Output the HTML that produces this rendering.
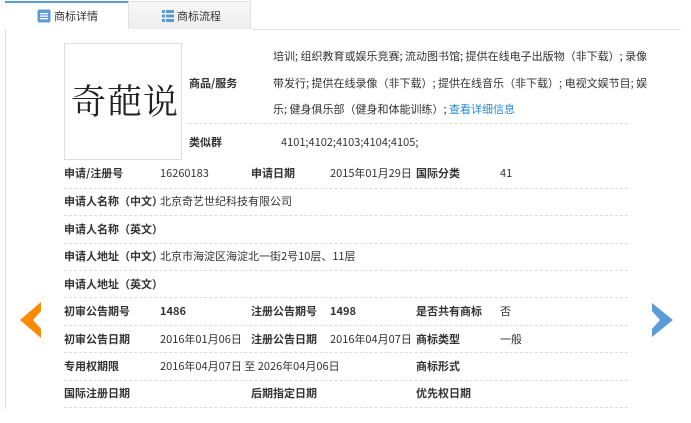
<!DOCTYPE html>
<html><head><meta charset="utf-8"><style>
*{margin:0;padding:0;box-sizing:border-box}
body{width:691px;height:423px;background:#fff;font-family:"Noto Sans CJK SC","Liberation Sans",sans-serif;font-size:11px;line-height:14px;color:#333;position:relative;overflow:hidden}
.a{position:absolute;white-space:nowrap}
.l{font-weight:bold;color:#333}
.sep{position:absolute;left:64px;width:564px;border-top:1px dashed #dcdcdc;height:0}
</style></head><body>
<div class="a" style="left:5px;top:1px;width:123px;height:29px;border-top:2px solid #5b9bd5;background:#fff"></div>
<div class="a" style="left:128px;top:1px;width:123px;height:28px;background:linear-gradient(#f7f7f7,#eeeeee);border:1px solid #e0e0e0;border-bottom:none"></div>
<div class="a" style="left:251px;top:29px;width:430px;border-top:1px solid #e3e3e3"></div>
<div class="a" style="left:5px;top:29px;width:1px;height:380px;background:#e3e3e3"></div>
<svg class="a" style="left:37px;top:9px" width="14" height="14"><rect x="0.5" y="0.5" width="13" height="13" rx="2" fill="#5b9bd5"/><rect x="3" y="4" width="8" height="1.3" fill="#fff"/><rect x="3" y="6.5" width="8" height="1.3" fill="#fff"/><rect x="3" y="9" width="8" height="1.3" fill="#fff"/></svg>
<div class="a" style="left:54px;top:9px">商标详情</div>
<svg class="a" style="left:162px;top:10px" width="12" height="12" fill="#5b9bd5"><rect x="0" y="0" width="3" height="3"/><rect x="4" y="0" width="8" height="3"/><rect x="0" y="4.5" width="3" height="3"/><rect x="4" y="4.5" width="8" height="3"/><rect x="0" y="9" width="3" height="3"/><rect x="4" y="9" width="8" height="3"/></svg>
<div class="a" style="left:177px;top:9px">商标流程</div>

<div class="a" style="left:64px;top:43px;width:118px;height:117px;border:1px solid #ddd"></div>
<div class="a" style="left:71px;top:78px;font-size:35px;line-height:44px;font-family:'Noto Serif CJK SC','Noto Sans CJK SC',serif;color:#222;letter-spacing:1px">奇葩说</div>

<div class="a l" style="left:189px;top:76px">商品/服务</div>
<div class="a" style="left:273px;top:49px">培训; 组织教育或娱乐竞赛; 流动图书馆; 提供在线电子出版物（非下载）; 录像</div>
<div class="a" style="left:273px;top:76px">带发行; 提供在线录像（非下载）; 提供在线音乐（非下载）; 电视文娱节目; 娱</div>
<div class="a" style="left:273px;top:102px">乐; 健身俱乐部（健身和体能训练）; <span style="color:#2a8bd6">查看详细信息</span></div>
<div class="a" style="left:189px;top:123px;width:439px;border-top:1px dashed #dcdcdc"></div>
<div class="a l" style="left:189px;top:135px">类似群</div>
<div class="a" style="left:281px;top:135px">4101;4102;4103;4104;4105;</div>

<div class="a l" style="left:64px;top:166px">申请/注册号</div><div class="a" style="left:160px;top:166px">16260183</div>
<div class="a l" style="left:251px;top:166px">申请日期</div><div class="a" style="left:330px;top:166px">2015年01月29日</div>
<div class="a l" style="left:416px;top:166px">国际分类</div><div class="a" style="left:500px;top:166px">41</div>
<div class="sep" style="top:188px"></div>
<div class="a l" style="left:64px;top:194px">申请人名称（中文）</div><div class="a" style="left:160px;top:194px">北京奇艺世纪科技有限公司</div>
<div class="sep" style="top:215px"></div>
<div class="a l" style="left:64px;top:222px">申请人名称（英文）</div>
<div class="sep" style="top:243px"></div>
<div class="a l" style="left:64px;top:249px">申请人地址（中文）</div><div class="a" style="left:160px;top:249px">北京市海淀区海淀北一街2号10层、11层</div>
<div class="sep" style="top:270px"></div>
<div class="a l" style="left:64px;top:277px">申请人地址（英文）</div>
<div class="sep" style="top:297px"></div>
<div class="a l" style="left:64px;top:304px">初审公告期号</div><div class="a l" style="left:160px;top:304px">1486</div>
<div class="a l" style="left:251px;top:304px">注册公告期号</div><div class="a l" style="left:330px;top:304px">1498</div>
<div class="a l" style="left:416px;top:304px">是否共有商标</div><div class="a" style="left:500px;top:304px">否</div>
<div class="sep" style="top:325px"></div>
<div class="a l" style="left:64px;top:332px">初审公告日期</div><div class="a" style="left:160px;top:332px">2016年01月06日</div>
<div class="a l" style="left:251px;top:332px">注册公告日期</div><div class="a" style="left:330px;top:332px">2016年04月07日</div>
<div class="a l" style="left:416px;top:332px">商标类型</div><div class="a" style="left:500px;top:332px">一般</div>
<div class="sep" style="top:352px"></div>
<div class="a l" style="left:64px;top:359px">专用权期限</div><div class="a" style="left:160px;top:359px">2016年04月07日 至 2026年04月06日</div>
<div class="a l" style="left:416px;top:359px">商标形式</div>
<div class="sep" style="top:380px"></div>
<div class="a l" style="left:64px;top:386px">国际注册日期</div>
<div class="a l" style="left:251px;top:386px">后期指定日期</div>
<div class="a l" style="left:416px;top:386px">优先权日期</div>
<div class="sep" style="top:407px"></div>

<svg class="a" style="left:0;top:0" width="691" height="423"><polygon points="20,320 41,302 41,311 33,320 41,329 41,338" fill="#ff8a00"/><polygon points="673,320 652,303 652,311 660,320 652,329 652,337" fill="#5b9bd5"/></svg>
</body></html>
